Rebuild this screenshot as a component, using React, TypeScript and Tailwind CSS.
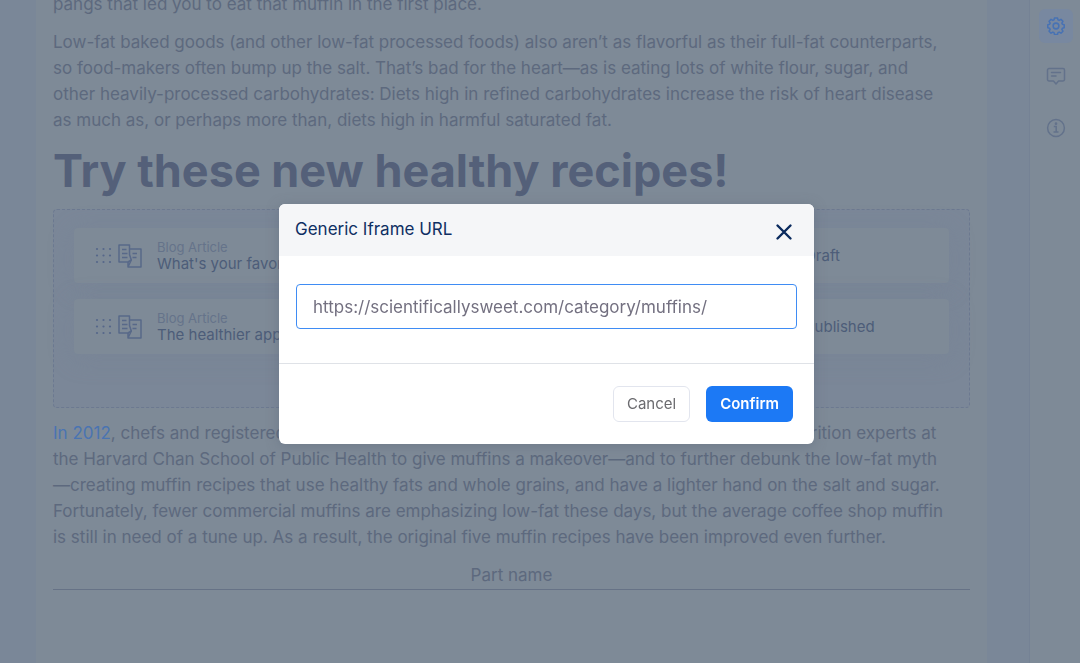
import { useState } from "react";

type Article = {
  id: number;
  kind: string;
  title: string;
  status: string;
};

const articles: Article[] = [
  { id: 1, kind: "Blog Article", title: "What's your favorite muffin?", status: "Draft" },
  { id: 2, kind: "Blog Article", title: "The healthier apple muffin", status: "Published" },
];

function DragDots() {
  return (
    <svg width="17" height="17" viewBox="0 0 17 17" fill="#56678a" aria-hidden="true">
      {[2, 8.5, 15].map((y) =>
        [2, 8.5, 15].map((x) => <circle key={`${x}-${y}`} cx={x} cy={y} r="1.1" />)
      )}
    </svg>
  );
}

function ArticleIcon() {
  return (
    <svg width="24" height="24" viewBox="0 0 24 24" fill="none" stroke="#586989" strokeWidth="1.5" strokeLinejoin="round" aria-hidden="true">
      <path d="M1 1h10.500v9.500l1.800 5.500-3.300 2H1z" />
      <path d="M11.500 5H23v18H10v-5M10 23l3.300-7" />
      <path d="M4 5.500h4.500M4 9.500h5.500M4 13.500h5.500M14.500 9.500h4.500M14.500 13.500h4" />
    </svg>
  );
}

function GearIcon() {
  return (
    <svg width="18" height="18" viewBox="0 0 20 20" fill="none" stroke="#4772b4" strokeWidth="1.700" strokeLinejoin="round" aria-hidden="true">
      <path d="M8.300 1h3.400l.5 2.200 1.300.6 2-1.200 2.200 2.200-1.200 2 .6 1.300 2 .5v3.400l-2 .5-.6 1.300 1.200 2-2.200 2.200-2-1.200-1.300.6-.5 2H8.300l-.5-2-1.300-.6-2 1.200-2.200-2.200 1.200-2-.6-1.300-2-.5V8.600l2-.5.6-1.300-1.200-2 2.200-2.200 2 1.200 1.300-.6z" />
      <circle cx="10" cy="10" r="3.200" />
    </svg>
  );
}

function CommentIcon() {
  return (
    <svg width="20" height="20" viewBox="0 0 20 20" fill="none" stroke="#63728b" strokeWidth="1.500" strokeLinejoin="round" strokeLinecap="round" aria-hidden="true">
      <path d="M3 1.500h14a1.500 1.500 0 0 1 1.500 1.500v9.500a1.500 1.500 0 0 1-1.500 1.500h-4.500L10 17l-2.500-3H3a1.500 1.500 0 0 1-1.500-1.500V3A1.500 1.500 0 0 1 3 1.500z" />
      <path d="M5.500 5.500h9M5.500 9h4.500" />
    </svg>
  );
}

function InfoIcon() {
  return (
    <svg width="20" height="20" viewBox="0 0 20 20" fill="none" stroke="#63728b" strokeWidth="1.500" aria-hidden="true">
      <circle cx="10" cy="10" r="8.400" />
      <path d="M7.800 8.600h2.400v5M7.500 13.900h5" />
      <circle cx="10" cy="5.700" r=".6" fill="#63728b" />
    </svg>
  );
}

function ArticleCard({ article }: { article: Article }) {
  return (
    <li className="flex h-[55px] items-center rounded bg-[#7e8a97] pr-5 pl-[21px] shadow-[0_4px_24px_#75829466]">
      <DragDots />
      <span className="ml-1.5">
        <ArticleIcon />
      </span>
      <div className="ml-[15px] flex-1">
        <p className="text-[13px] leading-4 text-[#65738a]">{article.kind}</p>
        <p className="text-[15px] leading-[18px] text-[#4d5d79]">{article.title}</p>
      </div>
      <p className="w-31 text-[15px] text-[#4d5d79]">{article.status}</p>
    </li>
  );
}

function IframeDialog() {
  const [url, setUrl] = useState("https://scientificallysweet.com/category/muffins/");

  return (
    <div className="fixed inset-0 flex items-start justify-center pt-[204px] pl-[13px]">
      <form
        role="dialog"
        aria-labelledby="dialog-title"
        onSubmit={(e) => e.preventDefault()}
        className="w-full max-w-[535px] overflow-hidden rounded-md bg-white shadow-[0_2px_12px_#5f6c7e80]"
      >
        <header className="flex h-[52px] items-center justify-between bg-[#f5f6f8] pr-[21px] pl-4">
          <h2 id="dialog-title" className="text-[17px] text-[#0f2f63]">
            Generic Iframe URL
          </h2>
          <button type="button" aria-label="Close" className="pt-1">
            <svg width="18" height="18" viewBox="0 0 18 18" stroke="#0a2a5e" strokeWidth="2.400" strokeLinecap="round">
              <path d="M2.500 2.500l13 13M15.500 2.500l-13 13" />
            </svg>
          </button>
        </header>
        <div className="px-[17px] pt-7 pb-[34px]">
          <input
            type="text"
            aria-label="Generic Iframe URL"
            value={url}
            onChange={(e) => setUrl(e.target.value)}
            className="h-[45px] w-full rounded border border-[#3f8cf4] px-4 text-[17px] text-[#737080] outline-none"
          />
        </div>
        <footer className="flex justify-end gap-4 border-t border-[#dfe2e7] px-[21px] py-[22px]">
          <button type="button" className="h-9 rounded-md border border-[#e2e5ee] px-[13px] text-[15px] text-[#6b6b6f]">
            Cancel
          </button>
          <button type="submit" className="h-9 rounded-md bg-[#1c79f5] px-3.5 text-[15px] font-semibold text-white">
            Confirm
          </button>
        </footer>
      </form>
    </div>
  );
}

export default function App() {
  return (
    <div className="flex h-screen overflow-hidden bg-[#7a8798] font-[Inter,'Liberation_Sans',sans-serif]">
      <main className="ml-9 flex-1 overflow-hidden bg-[#7e8a97] px-[17px] text-[17px] leading-[26px] whitespace-nowrap text-[#5d697e]">
        <p className="-mt-[9px] mb-3">pangs that led you to eat that muffin in the first place.</p>
        <p>
          Low-fat baked goods (and other low-fat processed foods) also aren’t as flavorful as their full-fat counterparts,
          <br />
          so food-makers often bump up the salt. That’s bad for the heart—as is eating lots of white flour, sugar, and
          <br />
          other heavily-processed carbohydrates: Diets high in refined carbohydrates increase the risk of heart disease
          <br />
          as much as, or perhaps more than, diets high in harmful saturated fat.
        </p>
        <h1 className="my-3 text-[45px] leading-[52px] font-bold text-[#546079]">Try these new healthy recipes!</h1>
        <ul className="flex h-[199px] flex-col gap-4 rounded border border-dashed border-[#6c7990] bg-[#7b8798] px-5 py-[18px]">
          {articles.map((a) => (
            <ArticleCard key={a.id} article={a} />
          ))}
        </ul>
        <p className="my-3">
          <a href="#" className="text-[#4a74b2]">
            In 2012
          </a>
          , chefs and registered dietitians at The Culinary Institute of America teamed up with nutrition experts at
          <br />
          the Harvard Chan School of Public Health to give muffins a makeover—and to further debunk the low-fat myth
          <br />
          —creating muffin recipes that use healthy fats and whole grains, and have a lighter hand on the salt and sugar.
          <br />
          Fortunately, fewer commercial muffins are emphasizing low-fat these days, but the average coffee shop muffin
          <br />
          is still in need of a tune up. As a result, the original five muffin recipes have been improved even further.
        </p>
        <p className="border-b border-[#667286] pb-px text-center">Part name</p>
      </main>
      <aside className="ml-[42px] flex w-[51px] flex-col items-center gap-[17px] border-l border-[#758295] bg-[#7e8a97] pt-[9px] pl-0.5">
        <button type="button" aria-label="Settings" className="flex size-[34px] items-center justify-center rounded-md bg-[#7888a0]">
          <GearIcon />
        </button>
        <button type="button" aria-label="Comments" className="flex size-[34px] items-center justify-center">
          <CommentIcon />
        </button>
        <button type="button" aria-label="Info" className="flex size-[34px] items-center justify-center">
          <InfoIcon />
        </button>
      </aside>
      <IframeDialog />
    </div>
  );
}
